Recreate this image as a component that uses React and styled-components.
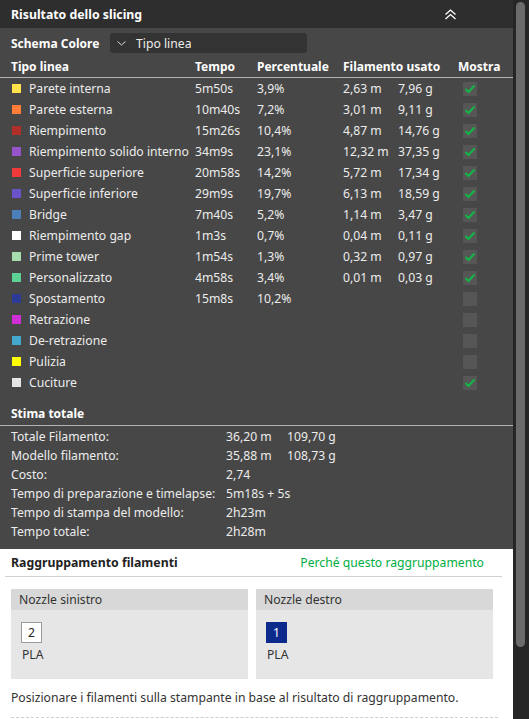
import React from "react";
import styled, { createGlobalStyle } from "styled-components";

const GlobalStyle = createGlobalStyle`
  html, body {
    margin: 0;
    padding: 0;
    background: #262626;
    overflow: hidden;
  }
  body {
    font-family: "Noto Sans", "Open Sans", sans-serif;
    font-size: 12.2px;
  }
`;

const Page = styled.div`
  display: flex;
  height: 719px;
  overflow: hidden;
`;

const Main = styled.div`
  width: 513px;
  display: flex;
  flex-direction: column;
`;

const ScrollTrack = styled.div`
  width: 16px;
  background: #262626;
  padding: 2px 3px 0 3px;
  box-sizing: border-box;
`;

const Thumb = styled.div`
  width: 9px;
  height: 645px;
  border-radius: 5px;
  background: #6b6b6b;
`;

const TitleBar = styled.div`
  flex-shrink: 0;
  height: 28px;
  background: #2e2e2e;
  display: flex;
  align-items: center;
  justify-content: space-between;
  padding: 0 56px 0 11px;
  color: #fff;
  font-weight: 700;
  font-size: 12.3px;
`;

const DarkPanel = styled.div`
  flex-shrink: 0;
  background: #474747;
  color: #ececec;
  padding-bottom: 8px;
`;

const SchemeRow = styled.div`
  display: flex;
  align-items: center;
  height: 28px;
  padding: 5px 0 3px 11px;
  box-sizing: border-box;
`;

const SchemeLabel = styled.span`
  width: 99px;
  font-weight: 700;
  font-size: 12px;
  color: #fff;
`;

const Dropdown = styled.div`
  width: 197px;
  height: 20px;
  background: #333;
  border-radius: 3px;
  display: flex;
  align-items: center;
  gap: 10px;
  padding-left: 7px;
  box-sizing: border-box;
  color: #ececec;
`;

const LegendGrid = styled.div`
  display: grid;
  grid-template-columns: 18px 166px 62px 86px 55px 60px 1fr;
  padding-left: 11px;
  align-items: center;
  height: 21px;
  font-weight: ${(p) => (p.$head ? 700 : 400)};
  font-size: ${(p) => (p.$head ? "12px" : "inherit")};
  color: ${(p) => (p.$head ? "#fff" : "#ececec")};
  border-bottom: ${(p) => (p.$head ? "1px solid #b4b4b4" : "none")};
  white-space: nowrap;
`;

const Span2 = styled.span`
  grid-column: span 2;
`;

const Swatch = styled.span`
  width: 9px;
  height: 9px;
  background: ${(p) => p.$color};
  margin-left: 1px;
`;

const CheckBox = styled.span`
  width: 14px;
  height: 14px;
  margin-left: 5px;
  background: #565656;
  display: flex;
  align-items: center;
  justify-content: center;
`;

const SectionTitle = styled.div`
  height: 24px;
  margin-top: 8px;
  padding-left: 11px;
  display: flex;
  align-items: center;
  font-weight: 700;
  font-size: 12px;
  color: #fff;
  border-bottom: 1px solid #b4b4b4;
`;

const SummaryList = styled.div`
  padding-top: 1px;
`;

const SummaryRow = styled.div`
  display: grid;
  grid-template-columns: 215px 61px 1fr;
  padding-left: 11px;
  height: 19px;
  align-items: center;
  white-space: nowrap;
`;

const LightPanel = styled.div`
  flex: 1 0 auto;
  background: #fff;
  padding: 0 11px 0 5px;
  color: #333;
`;

const GroupHeader = styled.div`
  height: 27px;
  display: flex;
  align-items: center;
  justify-content: space-between;
  padding: 0 18px 0 6px;
  border-bottom: 1px solid #d2d2d2;
`;

const GroupTitle = styled.span`
  font-weight: 700;
  font-size: 12.3px;
  color: #222;
`;

const GreenLink = styled.span`
  color: #00ae42;
`;

const NozzleRow = styled.div`
  display: grid;
  grid-template-columns: 237px 237px;
  gap: 8px;
  margin: 12px 0 0 6px;
`;

const NozzleBox = styled.div`
  height: 90px;
  background: #e6e6e6;
`;

const NozzleHead = styled.div`
  height: 21px;
  background: #d8d8d8;
  padding-left: 8px;
  display: flex;
  align-items: center;
`;

const NozzleBody = styled.div`
  padding: 12px 0 0 10px;
  display: flex;
  flex-direction: column;
  align-items: flex-start;
  gap: 3px;
`;

const Badge = styled.span`
  width: 21px;
  height: 21px;
  box-sizing: border-box;
  display: flex;
  align-items: center;
  justify-content: center;
  background: ${(p) => p.$bg};
  color: ${(p) => p.$fg};
  border: 1px solid ${(p) => p.$border};
`;

const MaterialName = styled.span`
  padding-left: 1px;
`;

const Hint = styled.div`
  margin: 10px 0 0 6px;
  padding-bottom: 11px;
  border-bottom: 1px dashed #cfcfcf;
  width: 487px;
`;

const lineTypes = [
  { name: "Parete interna", color: "#ffe34a", time: "5m50s", pct: "3,9%", m: "2,63 m", g: "7,96 g", on: true },
  { name: "Parete esterna", color: "#ff7d38", time: "10m40s", pct: "7,2%", m: "3,01 m", g: "9,11 g", on: true },
  { name: "Riempimento", color: "#b03029", time: "15m26s", pct: "10,4%", m: "4,87 m", g: "14,76 g", on: true },
  { name: "Riempimento solido interno", color: "#9654cc", time: "34m9s", pct: "23,1%", m: "12,32 m", g: "37,35 g", on: true },
  { name: "Superficie superiore", color: "#f03a3a", time: "20m58s", pct: "14,2%", m: "5,72 m", g: "17,34 g", on: true },
  { name: "Superficie inferiore", color: "#6a52c8", time: "29m9s", pct: "19,7%", m: "6,13 m", g: "18,59 g", on: true },
  { name: "Bridge", color: "#4d80ba", time: "7m40s", pct: "5,2%", m: "1,14 m", g: "3,47 g", on: true },
  { name: "Riempimento gap", color: "#ffffff", time: "1m3s", pct: "0,7%", m: "0,04 m", g: "0,11 g", on: true },
  { name: "Prime tower", color: "#a8dcae", time: "1m54s", pct: "1,3%", m: "0,32 m", g: "0,97 g", on: true },
  { name: "Personalizzato", color: "#5ed194", time: "4m58s", pct: "3,4%", m: "0,01 m", g: "0,03 g", on: true },
  { name: "Spostamento", color: "#2c3a98", time: "15m8s", pct: "10,2%", m: "", g: "", on: false },
  { name: "Retrazione", color: "#d22ed8", time: "", pct: "", m: "", g: "", on: false },
  { name: "De-retrazione", color: "#44a8cc", time: "", pct: "", m: "", g: "", on: false },
  { name: "Pulizia", color: "#ffff00", time: "", pct: "", m: "", g: "", on: false },
  { name: "Cuciture", color: "#e6e6e6", time: "", pct: "", m: "", g: "", on: true },
];

const summary = [
  ["Totale Filamento:", "36,20 m", "109,70 g"],
  ["Modello filamento:", "35,88 m", "108,73 g"],
  ["Costo:", "2,74", ""],
  ["Tempo di preparazione e timelapse:", "5m18s + 5s", ""],
  ["Tempo di stampa del modello:", "2h23m", ""],
  ["Tempo totale:", "2h28m", ""],
];

function CollapseIcon() {
  return (
    <svg width="13" height="11" viewBox="0 0 13 11" fill="none" stroke="#fff" strokeWidth="1.3">
      <path d="M1.5 5.5 L6.5 1 L11.5 5.5" />
      <path d="M1.5 10 L6.5 5.5 L11.5 10" />
    </svg>
  );
}

function ChevronDown() {
  return (
    <svg width="9" height="5" viewBox="0 0 9 5" fill="none" stroke="#ddd" strokeWidth="1">
      <path d="M0.5 0.5 L4.5 4 L8.5 0.5" />
    </svg>
  );
}

function Check() {
  return (
    <svg width="12" height="10" viewBox="0 0 12 10" fill="none" stroke="#14b548" strokeWidth="2.2">
      <path d="M1.5 5 L4.5 8 L10.5 1.5" />
    </svg>
  );
}

export default function App() {
  return (
    <Page>
      <GlobalStyle />
      <Main>
        <TitleBar>
          <span>Risultato dello slicing</span>
          <CollapseIcon />
        </TitleBar>
        <DarkPanel>
          <SchemeRow>
            <SchemeLabel>Schema Colore</SchemeLabel>
            <Dropdown>
              <ChevronDown />
              <span>Tipo linea</span>
            </Dropdown>
          </SchemeRow>
          <LegendGrid $head>
            <Span2>Tipo linea</Span2>
            <span>Tempo</span>
            <span>Percentuale</span>
            <Span2>Filamento usato</Span2>
            <span>Mostra</span>
          </LegendGrid>
          {lineTypes.map((row) => (
            <LegendGrid key={row.name}>
              <Swatch $color={row.color} />
              <span>{row.name}</span>
              <span>{row.time}</span>
              <span>{row.pct}</span>
              <span>{row.m}</span>
              <span>{row.g}</span>
              <CheckBox>{row.on && <Check />}</CheckBox>
            </LegendGrid>
          ))}
          <SectionTitle>Stima totale</SectionTitle>
          <SummaryList>
            {summary.map(([label, a, b]) => (
              <SummaryRow key={label}>
                <span>{label}</span>
                <span>{a}</span>
                <span>{b}</span>
              </SummaryRow>
            ))}
          </SummaryList>
        </DarkPanel>
        <LightPanel>
          <GroupHeader>
            <GroupTitle>Raggruppamento filamenti</GroupTitle>
            <GreenLink>Perché questo raggruppamento</GreenLink>
          </GroupHeader>
          <NozzleRow>
            <NozzleBox>
              <NozzleHead>Nozzle sinistro</NozzleHead>
              <NozzleBody>
                <Badge $bg="#fff" $fg="#222" $border="#9a9a9a">2</Badge>
                <MaterialName>PLA</MaterialName>
              </NozzleBody>
            </NozzleBox>
            <NozzleBox>
              <NozzleHead>Nozzle destro</NozzleHead>
              <NozzleBody>
                <Badge $bg="#0c2a8c" $fg="#fff" $border="#0c2a8c">1</Badge>
                <MaterialName>PLA</MaterialName>
              </NozzleBody>
            </NozzleBox>
          </NozzleRow>
          <Hint>Posizionare i filamenti sulla stampante in base al risultato di raggruppamento.</Hint>
        </LightPanel>
      </Main>
      <ScrollTrack>
        <Thumb />
      </ScrollTrack>
    </Page>
  );
}
